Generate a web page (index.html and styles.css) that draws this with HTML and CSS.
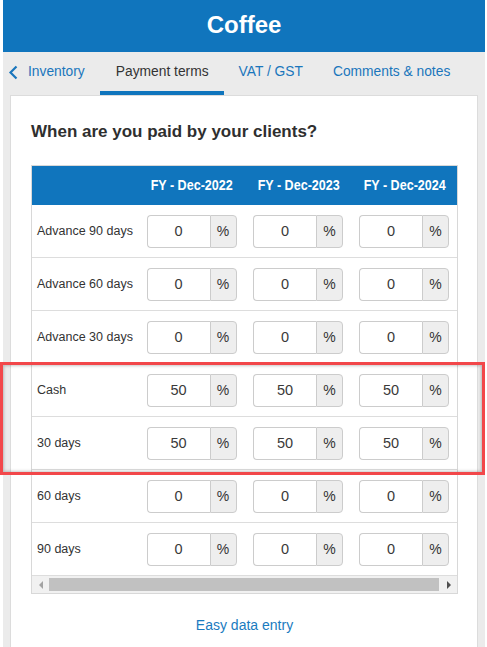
FILE: index.html
```html
<!DOCTYPE html>
<html>
<head>
<meta charset="utf-8">
<link rel="stylesheet" href="styles.css">
</head>
<body>
<div class="app">
  <header class="topbar">Coffee</header>
  <nav class="tabs">
    <a class="tab tab-back"><svg class="chev" width="10" height="15" viewBox="0 0 10 15"><polyline points="8.5,1.5 2.5,7.5 8.5,13.5" fill="none" stroke="#1a76bc" stroke-width="2.2"/></svg>Inventory</a>
    <a class="tab tab-active">Payment terms</a>
    <a class="tab">VAT / GST</a>
    <a class="tab">Comments &amp; notes</a>
  </nav>
  <main class="card">
    <h2 class="question">When are you paid by your clients?</h2>
    <div class="grid-wrap">
      <div class="grid">
        <div class="hcell"></div>
        <div class="hcell"><span class="narrow">FY - Dec-2022</span></div>
        <div class="hcell"><span class="narrow">FY - Dec-2023</span></div>
        <div class="hcell"><span class="narrow">FY - Dec-2024</span></div>

        <div class="lcell">Advance 90 days</div>
        <div class="vcell"><div class="ig"><span class="iv">0</span><span class="ia">%</span></div></div>
        <div class="vcell"><div class="ig"><span class="iv">0</span><span class="ia">%</span></div></div>
        <div class="vcell"><div class="ig"><span class="iv">0</span><span class="ia">%</span></div></div>

        <div class="lcell">Advance 60 days</div>
        <div class="vcell"><div class="ig"><span class="iv">0</span><span class="ia">%</span></div></div>
        <div class="vcell"><div class="ig"><span class="iv">0</span><span class="ia">%</span></div></div>
        <div class="vcell"><div class="ig"><span class="iv">0</span><span class="ia">%</span></div></div>

        <div class="lcell">Advance 30 days</div>
        <div class="vcell"><div class="ig"><span class="iv">0</span><span class="ia">%</span></div></div>
        <div class="vcell"><div class="ig"><span class="iv">0</span><span class="ia">%</span></div></div>
        <div class="vcell"><div class="ig"><span class="iv">0</span><span class="ia">%</span></div></div>

        <div class="lcell">Cash</div>
        <div class="vcell"><div class="ig"><span class="iv">50</span><span class="ia">%</span></div></div>
        <div class="vcell"><div class="ig"><span class="iv">50</span><span class="ia">%</span></div></div>
        <div class="vcell"><div class="ig"><span class="iv">50</span><span class="ia">%</span></div></div>

        <div class="lcell">30 days</div>
        <div class="vcell"><div class="ig"><span class="iv">50</span><span class="ia">%</span></div></div>
        <div class="vcell"><div class="ig"><span class="iv">50</span><span class="ia">%</span></div></div>
        <div class="vcell"><div class="ig"><span class="iv">50</span><span class="ia">%</span></div></div>

        <div class="lcell">60 days</div>
        <div class="vcell"><div class="ig"><span class="iv">0</span><span class="ia">%</span></div></div>
        <div class="vcell"><div class="ig"><span class="iv">0</span><span class="ia">%</span></div></div>
        <div class="vcell"><div class="ig"><span class="iv">0</span><span class="ia">%</span></div></div>

        <div class="lcell">90 days</div>
        <div class="vcell"><div class="ig"><span class="iv">0</span><span class="ia">%</span></div></div>
        <div class="vcell"><div class="ig"><span class="iv">0</span><span class="ia">%</span></div></div>
        <div class="vcell"><div class="ig"><span class="iv">0</span><span class="ia">%</span></div></div>
      </div>
      <div class="hscroll">
        <span class="arr arr-left"></span>
        <span class="thumb"></span>
        <span class="arr arr-right"></span>
      </div>
    </div>
    <a class="easy">Easy data entry</a>
  </main>
</div>
<div class="highlight"></div>
</body>
</html>
```

FILE: styles.css
```css
html, body {
  margin: 0;
  padding: 0;
}
body {
  background: #ffffff;
  font-family: "Liberation Sans", Arial, sans-serif;
  color: #333;
  position: relative;
  height: 647px;
  overflow: hidden;
}
.app {
  margin-left: 3px;
  width: 482px;
  background: #ebebeb;
  min-height: 647px;
}
.topbar {
  height: 52px;
  background: #1075bd;
  color: #fff;
  font-weight: bold;
  font-size: 24px;
  line-height: 50px;
  text-align: center;
}
.tabs {
  display: flex;
  height: 43px;
}
.tab {
  display: flex;
  align-items: center;
  height: 39px;
  padding: 0 15px 0 15px;
  border-bottom: 4px solid transparent;
  font-size: 13.8px;
  color: #1a76bc;
  white-space: nowrap;
}
.tab-back {
  padding-left: 5px;
  padding-right: 15px;
}
.chev {
  margin-right: 10px;
  margin-top: 1px;
}
.tab-active {
  color: #333;
  border-bottom-color: #1075bd;
  padding: 0 15px 0 16px;
}
.card {
  display: block;
  margin: 0 7px;
  background: #fff;
  border: 1px solid #dcdcdc;
  border-bottom: none;
  min-height: 560px;
  padding: 0 19px 0 20px;
}
.question {
  margin: 26px 0 0;
  font-size: 17px;
  line-height: 20px;
  font-weight: bold;
  color: #2f2f2f;
}
.grid-wrap {
  margin-top: 23px;
  border: 1px solid #d8d8d8;
}
.grid {
  display: grid;
  grid-template-columns: 106px 107px 106px 106px;
}
.hcell {
  background: #1075bd;
  color: #fff;
  height: 39px;
  display: flex;
  align-items: center;
  justify-content: center;
  font-weight: bold;
  font-size: 15.5px;
  padding-left: 1px;
}
.narrow {
  display: inline-block;
  white-space: nowrap;
  transform: scaleX(0.81);
  margin-top: -1px;
}
.lcell, .vcell {
  border-bottom: 1px solid #dddddd;
  display: flex;
  align-items: center;
  box-sizing: border-box;
  height: 53px;
}
.lcell {
  padding-left: 5px;
  font-size: 12.5px;
  color: #333;
  padding-bottom: 1px;
}
.vcell {
  justify-content: center;
}
.ig {
  display: flex;
  width: 90px;
  height: 33px;
}
.iv {
  flex: 1;
  border: 1px solid #cccccc;
  border-right: none;
  border-radius: 4px 0 0 4px;
  display: flex;
  align-items: center;
  justify-content: center;
  font-size: 14.5px;
  color: #3a3a3a;
}
.ia {
  width: 25px;
  border: 1px solid #cccccc;
  border-radius: 0 4px 4px 0;
  background: #eeeeee;
  display: flex;
  align-items: center;
  justify-content: center;
  font-size: 14px;
  color: #333;
}
.hscroll {
  display: flex;
  height: 17px;
  background: #f1f1f1;
  align-items: center;
}
.arr {
  width: 17px;
  height: 17px;
  display: flex;
  align-items: center;
  justify-content: center;
}
.arr-left::before {
  content: "";
  border-style: solid;
  border-width: 4px 4px 4px 0;
  border-color: transparent #a3a3a3 transparent transparent;
}
.arr-right::before {
  content: "";
  border-style: solid;
  border-width: 4px 0 4px 4px;
  border-color: transparent transparent transparent #505050;
}
.thumb {
  flex: 1;
  height: 13px;
  background: #c1c1c1;
  margin-right: 1px;
}
.easy {
  display: block;
  text-align: center;
  margin-top: 23px;
  font-size: 14px;
  line-height: 16px;
  color: #1a7bc0;
}
.highlight {
  position: absolute;
  left: 0;
  top: 362px;
  width: 485px;
  height: 113px;
  box-sizing: border-box;
  border: 3px solid #f2474a;
  box-shadow: inset 0 0 3px 1px rgba(0, 0, 0, 0.22);
  pointer-events: none;
}
```
